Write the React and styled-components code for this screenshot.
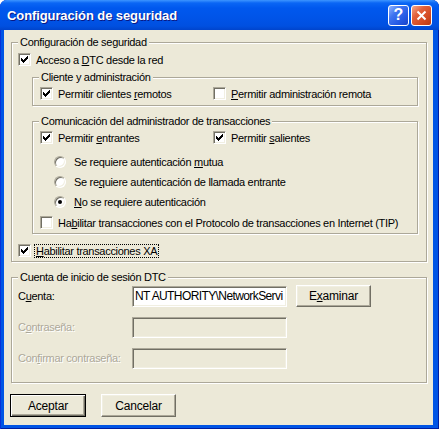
import React from "react";
import styled, { createGlobalStyle } from "styled-components";

const GlobalStyle = createGlobalStyle`
  html, body {
    margin: 0;
    padding: 0;
    background: #ffffff;
  }
  body {
    font-family: "Liberation Sans", Arial, sans-serif;
  }
`;

const Window = styled.div`
  width: 439px;
  height: 429px;
  display: flex;
  flex-direction: column;
  background: #0055e5;
  border-radius: 7px 7px 0 0;
  overflow: hidden;
  box-shadow: inset 1px 0 0 #0831d9, inset -1px 0 0 #001ea0, inset 0 -1px 0 #001ea0;
`;

const TitleBar = styled.div`
  height: 30px;
  flex: none;
  display: flex;
  align-items: center;
  padding: 0 7px 0 7px;
  background: linear-gradient(
    to bottom,
    #3d95ff 0,
    #0a66f5 3px,
    #0058ee 8px,
    #0054e8 18px,
    #0050e0 26px,
    #0044cc 30px
  );
`;

const Title = styled.div`
  flex: 1;
  color: #ffffff;
  font-weight: bold;
  font-size: 13px;
  letter-spacing: -0.1px;
  text-shadow: 1px 1px 0 #0a1883;
  white-space: nowrap;
`;

const CaptionButton = styled.div`
  width: 21px;
  height: 21px;
  box-sizing: border-box;
  margin-left: 2px;
  border: 1px solid #ffffff;
  border-radius: 3px;
  display: flex;
  align-items: center;
  justify-content: center;
  color: #ffffff;
  font-weight: bold;
  font-size: 16px;
  background: ${(p) =>
    p.$close
      ? "linear-gradient(135deg, #f3a88c 0%, #e2603a 35%, #d24a22 70%, #b93812 100%)"
      : "linear-gradient(135deg, #8fb4ff 0%, #3f74f0 35%, #2459e4 70%, #1a44c8 100%)"};
`;

const Client = styled.div`
  flex: 1;
  margin: 0 6px 4px 4px;
  padding: 0 7px;
  background: #ece9d8;
  display: flex;
  flex-direction: column;
  font-size: 11px;
  letter-spacing: -0.3px;
  color: #000000;
  white-space: nowrap;
`;

const Group = styled.fieldset`
  box-sizing: border-box;
  width: ${(p) => p.$width}px;
  min-width: 0;
  margin: ${(p) => p.$top}px 0 0 ${(p) => p.$left || 0}px;
  padding: ${(p) => p.$pad};
  border: 1px solid #aca899;
  border-radius: 0;
  box-shadow: inset 1px 1px 0 #ffffff, 1px 1px 0 #ffffff;
  display: flex;
  flex-direction: column;
`;

const Legend = styled.legend`
  padding: 0 2px 0 2px;
  margin-left: ${(p) => p.$shift || 0}px;
  line-height: 13px;
  height: 13px;
  background: #ece9d8;
`;

const CheckRow = styled.div`
  display: flex;
  align-items: center;
  gap: 5px;
  height: 17px;
  margin-top: ${(p) => p.$top || 0}px;
`;

const TwoCols = styled.div`
  display: grid;
  grid-template-columns: 173px auto;
`;

const Box = styled.span`
  width: 13px;
  height: 13px;
  box-sizing: border-box;
  flex: none;
  display: flex;
  align-items: center;
  justify-content: center;
  background: #ffffff;
  border: 1px solid;
  border-color: #aca899 #ffffff #ffffff #aca899;
  box-shadow: inset 1px 1px 0 #716f64, inset -1px -1px 0 #f1efe2;
`;

const RadioList = styled.div`
  display: flex;
  flex-direction: column;
  margin: 6px 0 0 14px;
`;

const RadioRow = styled.div`
  display: flex;
  align-items: center;
  gap: 8px;
  height: 20px;
`;

const Circle = styled.span`
  width: 12px;
  height: 12px;
  box-sizing: border-box;
  flex: none;
  border-radius: 50%;
  border: 1px solid;
  border-color: #aca899 #ffffff #ffffff #aca899;
  background: #ffffff;
  box-shadow: inset 1px 1px 0 #716f64, inset -1px -1px 0 #f1efe2;
  display: flex;
  align-items: center;
  justify-content: center;
`;

const Dot = styled.span`
  width: 4px;
  height: 4px;
  border-radius: 50%;
  background: #000000;
`;

const Key = styled.u`
  text-decoration: underline;
  text-underline-offset: 1px;
`;

const Focus = styled.span`
  outline: 1px dotted #000000;
  outline-offset: 0;
  padding: 0 1px;
  margin-left: -1px;
  line-height: 12px;
`;

const AccountGrid = styled.div`
  display: grid;
  grid-template-columns: 114px 155px 75px;
  grid-auto-rows: 22px;
  column-gap: 0;
  row-gap: 9px;
  align-items: center;
`;

const FieldLabel = styled.span`
  color: ${(p) => (p.$disabled ? "#aca899" : "#000000")};
  text-shadow: ${(p) => (p.$disabled ? "1px 1px 0 #ffffff" : "none")};
`;

const Field = styled.div`
  height: 21px;
  box-sizing: border-box;
  border: 1px solid;
  border-color: #aca899 #ffffff #ffffff #aca899;
  box-shadow: inset 1px 1px 0 #716f64, inset -1px -1px 0 #f1efe2;
  background: ${(p) => (p.$disabled ? "#ece9d8" : "#ffffff")};
  padding: 0 1px 0 2px;
  display: flex;
  align-items: center;
  overflow: hidden;
  font-size: 12px;
  letter-spacing: -0.6px;
`;

const Button = styled.div`
  box-sizing: border-box;
  width: ${(p) => p.$width || 75}px;
  height: ${(p) => p.$height || 23}px;
  margin-left: ${(p) => p.$left || 0}px;
  display: flex;
  align-items: center;
  justify-content: center;
  background: #ece9d8;
  border: 1px solid;
  border-color: ${(p) =>
    p.$default ? "#000000" : "#ffffff #716f64 #716f64 #ffffff"};
  box-shadow: ${(p) =>
    p.$default
      ? "inset 1px 1px 0 #ffffff, inset -1px -1px 0 #716f64, inset -2px -2px 0 #aca899"
      : "inset -1px -1px 0 #aca899, inset 1px 1px 0 #f1efe2"};
  font-size: 12px;
  letter-spacing: -0.2px;
`;

const ButtonRow = styled.div`
  display: flex;
  margin-top: 11px;
`;

const CheckMark = () => (
  <svg width="7" height="7" viewBox="0 0 7 7" shapeRendering="crispEdges">
    <path
      d="M0 2h1v3H0z M1 3h1v3H1z M2 4h1v3H2z M3 3h1v3H3z M4 2h1v3H4z M5 1h1v3H5z M6 0h1v3H6z"
      fill="#000000"
    />
  </svg>
);

const Checkbox = ({ checked, children, top }) => (
  <CheckRow $top={top}>
    <Box>{checked && <CheckMark />}</Box>
    <span>{children}</span>
  </CheckRow>
);

const Radio = ({ checked, children }) => (
  <RadioRow>
    <Circle>{checked && <Dot />}</Circle>
    <span>{children}</span>
  </RadioRow>
);

const CloseIcon = () => (
  <svg width="11" height="11" viewBox="0 0 11 11">
    <path d="M1.5 1.5 L9.5 9.5 M9.5 1.5 L1.5 9.5" stroke="#ffffff" strokeWidth="2" />
  </svg>
);

export default function App() {
  return (
    <>
      <GlobalStyle />
      <Window>
        <TitleBar>
          <Title>Configuración de seguridad</Title>
          <CaptionButton>?</CaptionButton>
          <CaptionButton $close>
            <CloseIcon />
          </CaptionButton>
        </TitleBar>
        <Client>
          <Group $width={416} $top={6} $pad="2px 6px 2px 6px">
            <Legend>Configuración de seguridad</Legend>
            <Checkbox checked>
              Acceso a <Key>D</Key>TC desde la red
            </Checkbox>

            <Group $width={386} $top={3} $left={14} $pad="1px 7px 3px 7px">
              <Legend $shift={-1}>Cliente y administración</Legend>
              <TwoCols>
                <Checkbox checked>
                  Permitir clientes <Key>r</Key>emotos
                </Checkbox>
                <Checkbox>
                  <Key>P</Key>ermitir administración remota
                </Checkbox>
              </TwoCols>
            </Group>

            <Group $width={386} $top={9} $left={14} $pad="1px 7px 2px 7px">
              <Legend $shift={-1}>Comunicación del administrador de transacciones</Legend>
              <TwoCols>
                <Checkbox checked>
                  Permitir <Key>e</Key>ntrantes
                </Checkbox>
                <Checkbox checked>
                  Permitir <Key>s</Key>alientes
                </Checkbox>
              </TwoCols>
              <RadioList>
                <Radio>
                  Se requiere autenticación <Key>m</Key>utua
                </Radio>
                <Radio>
                  Se re<Key>q</Key>uiere autenticación de llamada entrante
                </Radio>
                <Radio checked>
                  <Key>N</Key>o se requiere autenticación
                </Radio>
              </RadioList>
              <Checkbox top={2}>
                Ha<Key>b</Key>ilitar transacciones con el Protocolo de transacciones en Internet (TIP)
              </Checkbox>
            </Group>

            <Checkbox checked top={8}>
              <Focus>
                <Key>H</Key>abilitar transacciones XA
              </Focus>
            </Checkbox>
          </Group>

          <Group $width={416} $top={9} $pad="1px 6px 13px 6px">
            <Legend>Cuenta de inicio de sesión DTC</Legend>
            <AccountGrid>
              <FieldLabel>
                C<Key>u</Key>enta:
              </FieldLabel>
              <Field>NT AUTHORITY\NetworkServi</Field>
              <Button $left={9} $height={22}>
                E<Key>x</Key>aminar
              </Button>

              <FieldLabel $disabled>
                C<Key>o</Key>ntraseña:
              </FieldLabel>
              <Field $disabled />
              <span />

              <FieldLabel $disabled>
                Con<Key>f</Key>irmar contraseña:
              </FieldLabel>
              <Field $disabled />
              <span />
            </AccountGrid>
          </Group>

          <ButtonRow>
            <Button $default $width={76} $left={-1}>
              Aceptar
            </Button>
            <Button $left={15}>Cancelar</Button>
          </ButtonRow>
        </Client>
      </Window>
    </>
  );
}
